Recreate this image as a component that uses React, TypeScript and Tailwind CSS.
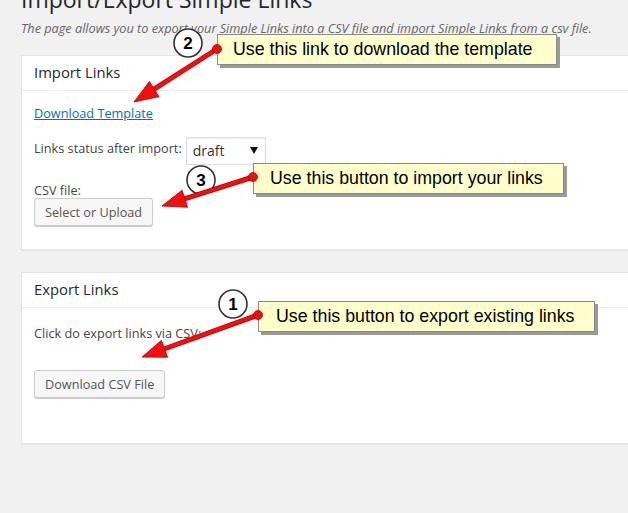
import React from 'react';

type Note = {
  n: string;
  text: string;
  box: { left: number; top: number; width: number; pad: number };
  circle: [number, number];
  dot: [number, number];
  tip: [number, number];
};

const notes: Note[] = [
  {
    n: '2',
    text: 'Use this link to download the template',
    box: { left: 217, top: 34, width: 340, pad: 15 },
    circle: [188, 43],
    dot: [217, 49],
    tip: [134, 102],
  },
  {
    n: '3',
    text: 'Use this button to import your links',
    box: { left: 253, top: 163, width: 311, pad: 16 },
    circle: [201, 180],
    dot: [253, 177],
    tip: [162, 206],
  },
  {
    n: '1',
    text: 'Use this button to export existing links',
    box: { left: 258, top: 301, width: 337, pad: 17 },
    circle: [233, 304],
    dot: [258, 315],
    tip: [142, 357],
  },
];

function Arrow({ from, to }: { from: [number, number]; to: [number, number] }) {
  const [x1, y1] = from;
  const [x2, y2] = to;
  const dx = x2 - x1;
  const dy = y2 - y1;
  const len = Math.sqrt(dx * dx + dy * dy);
  const ux = dx / len;
  const uy = dy / len;
  const head = 24;
  const half = 9;
  const bx = x2 - ux * head;
  const by = y2 - uy * head;
  const pts = [
    [x2, y2],
    [bx - uy * half, by + ux * half],
    [bx + uy * half, by - ux * half],
  ]
    .map((p) => p.join(','))
    .join(' ');

  return (
    <g>
      <line x1={x1} y1={y1} x2={bx + ux * 2} y2={by + uy * 2} stroke="#b00000" strokeWidth={5} />
      <line x1={x1} y1={y1} x2={bx + ux * 2} y2={by + uy * 2} stroke="#f01010" strokeWidth={3.5} />
      <polygon points={pts} fill="#f01010" stroke="#b00000" strokeWidth={0.8} />
      <circle cx={x1} cy={y1} r={4.5} fill="#f01010" stroke="#b00000" strokeWidth={0.8} />
    </g>
  );
}

function Panel({ title, children, inner }: { title: string; children: React.ReactNode; inner: string }) {
  return (
    <div className="mr-[-40px] border border-[#e5e5e5] bg-white shadow-[0_1px_1px_rgba(0,0,0,0.04)]">
      <h2 className="h-[35px] border-b border-[#eeeeee] px-[12px] pt-[7px] text-[14.8px] leading-[19.6px] text-[#23282d]">
        {title}
      </h2>
      <div className={`px-[12px] ${inner}`}>{children}</div>
    </div>
  );
}

function Button({ label }: { label: string }) {
  return (
    <button
      type="button"
      className="h-[28px] rounded-[3px] border border-[#cccccc] bg-[#f7f7f7] px-[10px] text-[12.7px] leading-[26px] text-[#555555] shadow-[0_1px_0_#cccccc]"
    >
      {label}
    </button>
  );
}

export default function App() {
  return (
    <div className="relative h-[513px] w-[628px] overflow-hidden bg-[#f1f1f1] font-['Open_Sans',sans-serif] text-[12.7px] text-[#444444]">
      <div className="pl-[21px]">
        <h1 className="-mt-[15px] text-[23px] font-normal leading-[29px] text-[#23282d]">
          Import/Export Simple Links
        </h1>
        <p className="mt-[4px] italic leading-[20px] text-[#666666]">
          The page allows you to export your Simple Links into a CSV file and import Simple Links from a csv file.
        </p>

        <div className="mt-[17px]">
          <Panel title="Import Links" inner="pt-[13px] pb-[23px]">
            <a href="#" className="block leading-[19.5px] text-[#0073aa] underline">
              Download Template
            </a>
            <div className="mt-[13px] flex items-center">
              <span className="pb-[3px] leading-[19.5px]">Links status after import:</span>
              <div className="ml-[4px] flex h-[28px] w-[80px] items-center justify-between border border-[#dddddd] bg-white pl-[6px] pr-[7px] text-[14px] text-[#333333] shadow-[inset_0_1px_2px_rgba(0,0,0,0.07)]">
                <span>draft</span>
                <svg width="8" height="7" viewBox="0 0 8 7">
                  <path d="M0 0h8L4 7z" fill="#111111" />
                </svg>
              </div>
            </div>
            <div className="mt-[16px] leading-[19.5px]">CSV file:</div>
            <div className="-mt-[2px]">
              <Button label="Select or Upload" />
            </div>
          </Panel>
        </div>

        <div className="mt-[22px]">
          <Panel title="Export Links" inner="pt-[16px] pb-[45px]">
            <p className="leading-[19.5px]">Click do export links via CSV:</p>
            <div className="mt-[26px]">
              <Button label="Download CSV File" />
            </div>
          </Panel>
        </div>
      </div>

      {notes.map((note) => (
        <div
          key={note.n}
          className="absolute h-[31px] border border-[#8a8a8a] bg-[#ffffcc] font-['Liberation_Sans',Arial,sans-serif] text-[17.8px] leading-[29px] text-black shadow-[3px_3px_0_#9a9a9a]"
          style={{ left: note.box.left, top: note.box.top, width: note.box.width, paddingLeft: note.box.pad }}
        >
          {note.text}
        </div>
      ))}

      <svg className="pointer-events-none absolute left-0 top-0" width="628" height="513">
        {notes.map((note) => (
          <g key={note.n}>
            <circle cx={note.circle[0]} cy={note.circle[1]} r={14} fill="#ffffff" stroke="#333333" strokeWidth={1.6} />
            <text
              x={note.circle[0]}
              y={note.circle[1] + 6}
              textAnchor="middle"
              fontFamily="Liberation Sans, Arial, sans-serif"
              fontWeight="bold"
              fontSize="17"
              fill="#000000"
            >
              {note.n}
            </text>
            <Arrow from={note.dot} to={note.tip} />
          </g>
        ))}
      </svg>
    </div>
  );
}
